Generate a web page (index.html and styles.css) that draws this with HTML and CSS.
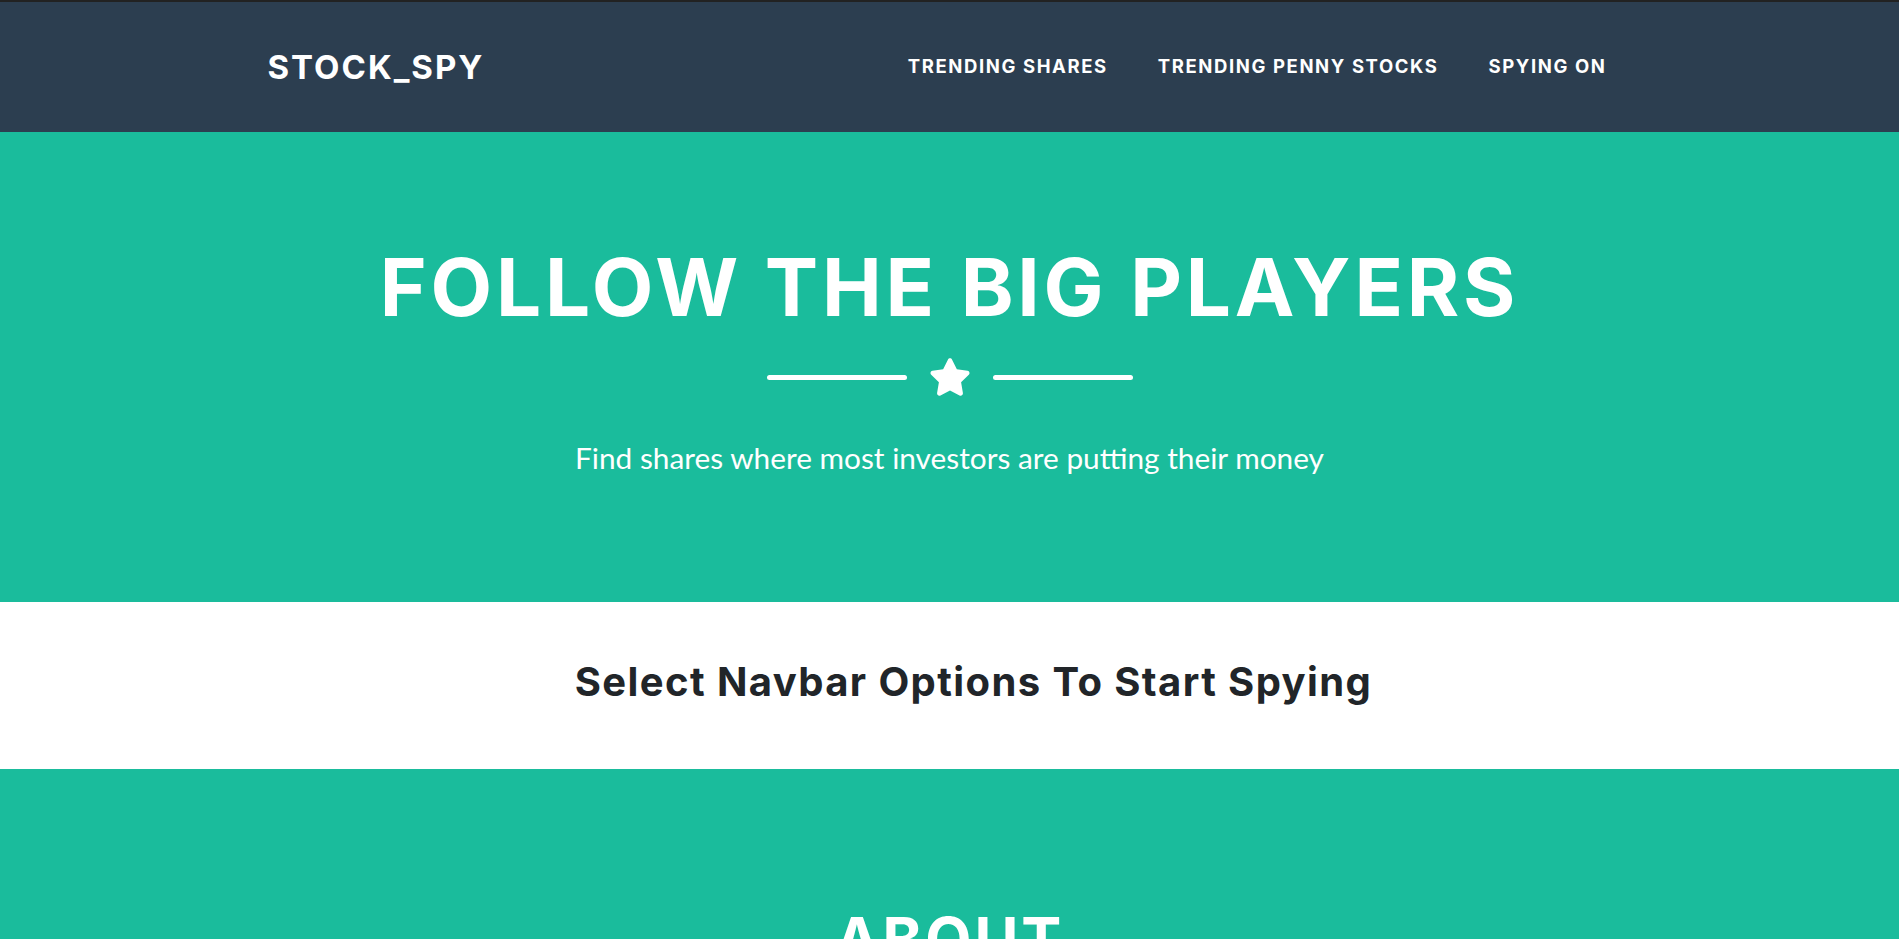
FILE: index.html
```html
<!DOCTYPE html>
<html lang="en">
<head>
<meta charset="utf-8">
<title>STOCK_SPY</title>
<link rel="stylesheet" href="styles.css">
</head>
<body>
<nav class="navbar">
  <div class="container nav-inner">
    <a class="brand" href="#">STOCK_SPY</a>
    <ul class="nav-links">
      <li><a href="#">TRENDING SHARES</a></li>
      <li><a href="#">TRENDING PENNY STOCKS</a></li>
      <li><a href="#">SPYING ON</a></li>
    </ul>
  </div>
</nav>
<header class="masthead">
  <h1 class="masthead-heading">FOLLOW THE BIG PLAYERS</h1>
  <div class="divider">
    <span class="divider-line"></span>
    <svg class="divider-icon" viewBox="0 0 576 512" aria-hidden="true"><path fill="#fff" d="M259.3 17.8L194 150.2 47.9 171.5c-26.2 3.8-36.7 36.1-17.7 54.6l105.7 103-25 145.5c-4.5 26.3 23.2 46 46.4 33.7L288 439.6l130.7 68.7c23.2 12.2 50.9-7.4 46.4-33.7l-25-145.5 105.7-103c19-18.5 8.5-50.8-17.7-54.6L382 150.2 316.7 17.8c-11.7-23.6-45.6-23.9-57.4 0z"/></svg>
    <span class="divider-line"></span>
  </div>
  <p class="masthead-sub">Find shares where most investors are putting their money</p>
</header>
<section class="select-section">
  <h2 class="select-heading">Select Navbar Options To Start Spying</h2>
</section>
<section class="about">
  <h2 class="about-heading">ABOUT</h2>
</section>
</body>
</html>
```
FILE: styles.css
```css
* { box-sizing: border-box; }
html, body { margin: 0; padding: 0; }
body {
  font-family: "Lato", "Liberation Sans", sans-serif;
  background: #1abc9c;
  color: #212529;
}
.navbar {
  background: #2c3e50;
  border-top: 2px solid #222;
  height: 132px;
  display: flex;
  align-items: center;
}
.container {
  width: 1364px;
  margin: 0 auto;
}
.nav-inner {
  display: flex;
  align-items: center;
  justify-content: space-between;
}
.brand {
  font-family: "Inter", "Liberation Sans", sans-serif;
  font-weight: 700;
  font-size: 33px;
  letter-spacing: 2px;
  color: #fff;
  text-decoration: none;
  line-height: 1;
}
.nav-links {
  list-style: none;
  margin: 0;
  padding: 0;
  display: flex;
}
.nav-links li { margin: 0 5px; }
.nav-links a {
  display: block;
  padding: 0 20px;
  font-family: "Inter", "Liberation Sans", sans-serif;
  font-weight: 700;
  font-size: 18.5px;
  letter-spacing: 1.6px;
  color: #fff;
  text-decoration: none;
  line-height: 1.5;
}
.masthead {
  background: #1abc9c;
  color: #fff;
  text-align: center;
  padding: 107px 0 121px;
}
.masthead-heading {
  margin: 0;
  font-family: "Inter", "Liberation Sans", sans-serif;
  font-weight: 700;
  font-size: 80px;
  line-height: 1.2;
  letter-spacing: 3.8px;
}
.divider {
  display: flex;
  align-items: center;
  justify-content: center;
  gap: 22px;
  margin-top: 22px;
  height: 40px;
}
.divider-line {
  width: 140px;
  height: 5px;
  background: #fff;
  border-radius: 5px;
}
.divider-icon {
  width: 42px;
  height: 38px;
  display: block;
}
.masthead-sub {
  margin: 39px 0 0;
  font-family: "Lato", "Liberation Sans", sans-serif;
  font-weight: 400;
  font-size: 29.8px;
  line-height: 1.5;
}
.select-section {
  background: #fff;
  text-align: center;
  padding: 56px 0 63px 48px;
}
.select-heading {
  margin: 0;
  font-family: "Inter", "Liberation Sans", sans-serif;
  font-weight: 700;
  font-size: 40px;
  line-height: 1.2;
  letter-spacing: 1.4px;
  color: #212529;
}
.about {
  background: #1abc9c;
  text-align: center;
  padding: 134px 0 120px;
}
.about-heading {
  margin: 0;
  font-family: "Inter", "Liberation Sans", sans-serif;
  font-weight: 700;
  font-size: 60px;
  line-height: 1.2;
  letter-spacing: 3px;
  color: #fff;
}
```
